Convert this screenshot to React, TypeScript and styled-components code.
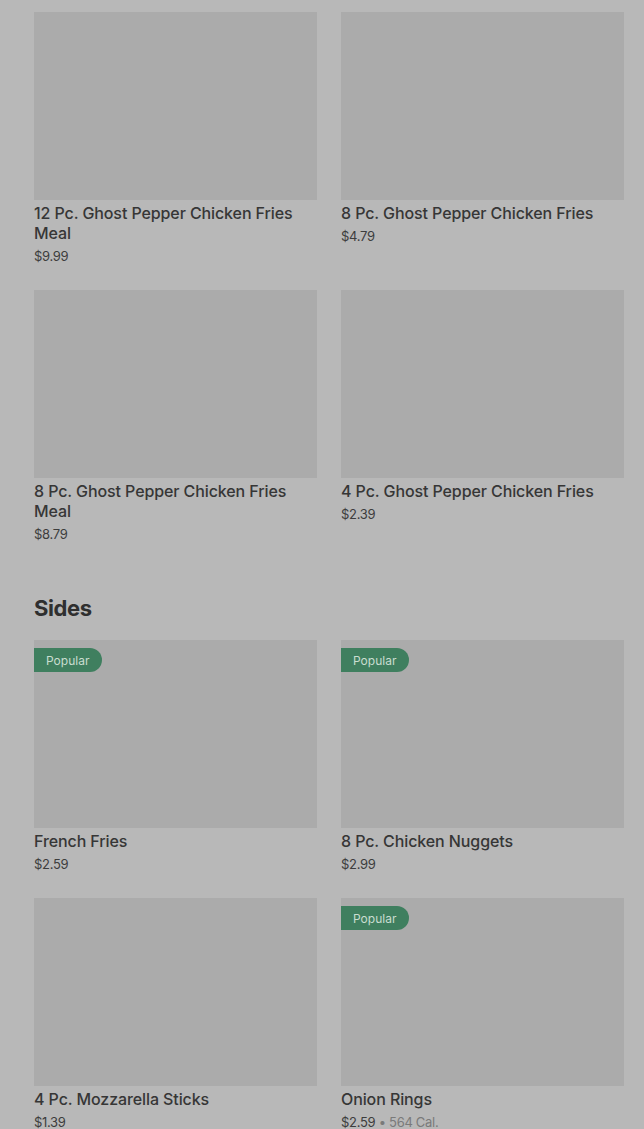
import React from "react";
import styled, { createGlobalStyle } from "styled-components";

const Global = createGlobalStyle`
  html, body { margin: 0; padding: 0; background: #b8b8b8; }
  body { font-family: Inter, "Noto Sans", Arial, sans-serif; overflow: hidden; }
`;

const Page = styled.div`
  background: #b8b8b8;
  min-height: 1129px;
  padding: 12px 20px 0 34px;
  box-sizing: border-box;
`;

const Section = styled.section`
  display: flex;
  flex-direction: column;
`;

const Heading = styled.h2`
  margin: 50px 0 18px;
  font-size: 22px;
  line-height: 28px;
  font-weight: 700;
  color: #2f2f2f;
  letter-spacing: -0.4px;
`;

const Grid = styled.div`
  display: grid;
  grid-template-columns: 283px 283px;
  column-gap: 24px;
  row-gap: 24px;
`;

const Card = styled.div`
  display: flex;
  flex-direction: column;
`;

const Thumb = styled.div`
  position: relative;
  height: 188px;
  background: #ababab;
`;

const Badge = styled.span`
  position: absolute;
  left: 0;
  top: 8px;
  height: 24px;
  padding: 0 13px 0 12px;
  display: flex;
  align-items: center;
  background: #3f7f5f;
  color: #c9ddd0;
  font-size: 12px;
  border-radius: 0 12px 12px 0;
`;

const Title = styled.div`
  margin-top: 3px;
  font-size: 16px;
  line-height: 20px;
  font-weight: 500;
  color: #363636;
  letter-spacing: -0.1px;
`;

const Meta = styled.div`
  margin-top: 3px;
  font-size: 13px;
  line-height: 20px;
  color: #3d3d3d;
  letter-spacing: -0.3px;
`;

const Cal = styled.span`
  color: #7a7a7a;
`;

type Item = { title: string; price: string; popular?: boolean; cal?: string };

const chicken: Item[] = [
  { title: "12 Pc. Ghost Pepper Chicken Fries Meal", price: "$9.99" },
  { title: "8 Pc. Ghost Pepper Chicken Fries", price: "$4.79" },
  { title: "8 Pc. Ghost Pepper Chicken Fries Meal", price: "$8.79" },
  { title: "4 Pc. Ghost Pepper Chicken Fries", price: "$2.39" },
];

const sides: Item[] = [
  { title: "French Fries", price: "$2.59", popular: true },
  { title: "8 Pc. Chicken Nuggets", price: "$2.99", popular: true },
  { title: "4 Pc. Mozzarella Sticks", price: "$1.39" },
  { title: "Onion Rings", price: "$2.59", popular: true, cal: "564 Cal." },
];

const ItemCard = ({ item }: { item: Item }) => (
  <Card>
    <Thumb>{item.popular && <Badge>Popular</Badge>}</Thumb>
    <Title>{item.title}</Title>
    <Meta>
      {item.price}
      {item.cal && <Cal> • {item.cal}</Cal>}
    </Meta>
  </Card>
);

export default function App() {
  return (
    <>
      <Global />
      <Page>
        <Section>
          <Grid>
            {chicken.map((i) => (
              <ItemCard key={i.title} item={i} />
            ))}
          </Grid>
        </Section>
        <Section>
          <Heading>Sides</Heading>
          <Grid>
            {sides.map((i) => (
              <ItemCard key={i.title} item={i} />
            ))}
          </Grid>
        </Section>
      </Page>
    </>
  );
}
